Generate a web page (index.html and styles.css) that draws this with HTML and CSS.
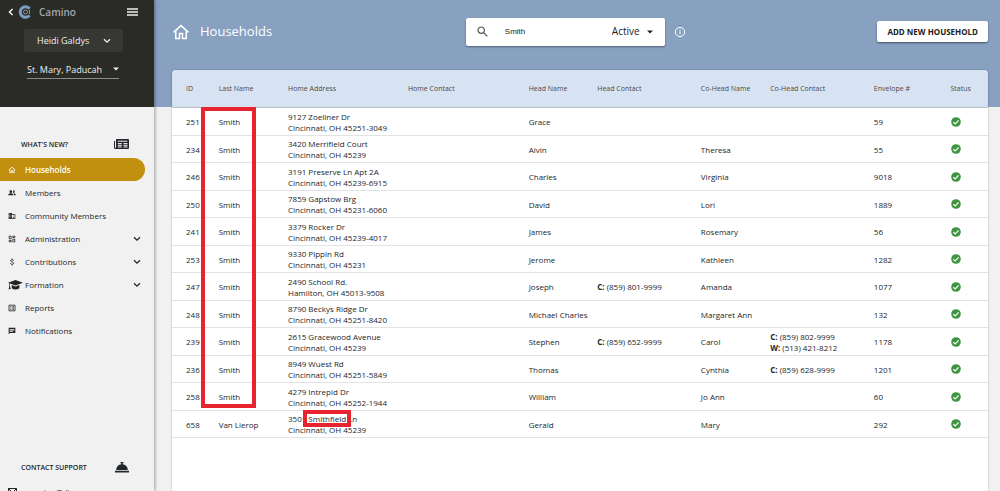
FILE: index.html
```html
<!DOCTYPE html>
<html lang="en">
<head>
<meta charset="utf-8">
<title>Camino – Households</title>
<link rel="stylesheet" href="styles.css">
</head>
<body>
<div class="app">
  <aside class="sidebar">
    <div class="brand-panel">
      <div class="brand">
        <svg class="back" viewBox="0 0 6 8"><path d="M4.6 1 1.4 4l3.2 3" /></svg>
        <svg class="logo" viewBox="0 0 14 14"><path class="logo-ring" d="M11.600 3.600A5.300 5.300 0 1 0 11.600 10.400" /><circle class="logo-core" cx="7.500" cy="7" r="2" /><path class="logo-core" d="M11.500 5V9" /></svg>
        <span class="brand-name">Camino</span>
        <button class="icon-button menu" aria-label="Menu"><svg viewBox="0 0 11 8"><path d="M0 1h11M0 4h11M0 7h11" /></svg></button>
      </div>
      <button class="user">Heidi Galdys<svg class="chevron" viewBox="0 0 8 6"><path d="m1 1.200 3 3 3-3" /></svg></button>
      <label class="parish"><select aria-label="Parish"><option>St. Mary, Paducah</option></select><svg class="caret" viewBox="0 0 6 4"><path d="M0 .5h6l-3 3z" /></svg></label>
    </div>
    <a class="side-head news-head" href="#">WHAT'S NEW?
      <svg class="news" viewBox="0 0 15 10"><path d="M2.500 0H14q1 0 1 1v8q0 1-1 1H1.500Q0 10 0 8.500V2h1v6.500q.7.800 1 0V1q0-1 .5-1z" /><path class="cut" d="M3.800 2.200h9.500M3.800 4.600h4M9.500 4.600h4M3.800 6.300h4M9.500 6.300h4M3.800 8h4M9.500 8h4" /></svg>
    </a>
    <nav class="nav">
      <a class="nav-item active" href="#"><svg class="nav-icon line" viewBox="0 0 24 24"><path d="M2.500 12 12 3.500l9.500 8.500M5.500 10v10h4.500v-6h4v6h4.500V10" /></svg>Households</a>
      <a class="nav-item" href="#"><svg class="nav-icon" viewBox="0 0 24 24"><circle cx="8.500" cy="8" r="4" /><path d="M1 19v-2c0-3 4-4.500 7.500-4.500S16 14 16 17v2zM15 4.200a4 4 0 1 1 0 7.600c1.500-2 1.500-5.600 0-7.600zM17 13c3 .4 6 1.700 6 4v2h-5v-2c0-1.700-.4-3-1-4z" /></svg>Members</a>
      <a class="nav-item" href="#"><svg class="nav-icon" viewBox="0 0 24 24"><path fill-rule="evenodd" d="M12 7V3H2v18h20V7zM6 19H4v-2h2zm0-4H4v-2h2zm0-4H4V9h2zm0-4H4V5h2zm4 12H8v-2h2zm0-4H8v-2h2zm0-4H8V9h2zm0-4H8V5h2zm10 12h-8V9h8zm-2-8h-3v2h3zm0 4h-3v2h3z" /></svg>Community Members</a>
      <a class="nav-item" href="#"><svg class="nav-icon line" viewBox="0 0 24 24"><path d="M3.500 3.500h6v8h-6zM14.500 3.500h6v4h-6zM14.500 12.500h6v8h-6zM3.500 16.500h6v4h-6z" /></svg>Administration<svg class="chevron" viewBox="0 0 8 6"><path d="m1 1.200 3 3 3-3" /></svg></a>
      <a class="nav-item" href="#"><svg class="nav-icon line" viewBox="0 0 24 24"><path d="M17 7.500C16 5 8 4 8 8.200c0 4.300 9 2.800 9 7.500 0 4.300-9 4-10 .3M12.500 1.500V5M12.500 19v3.500" /></svg>Contributions<svg class="chevron" viewBox="0 0 8 6"><path d="m1 1.200 3 3 3-3" /></svg></a>
      <a class="nav-item" href="#"><svg class="nav-icon cap" viewBox="0 0 15 10"><path d="M7.500 0 15 2.800 7.500 5.600 2 3.600v2.600l.7 3H.6l.7-3V3.300L0 2.800z" /><path d="M3.700 5 7.500 6.500 11.400 5v3.200Q7.500 10.600 3.700 8.200z" /></svg>Formation<svg class="chevron" viewBox="0 0 8 6"><path d="m1 1.200 3 3 3-3" /></svg></a>
      <a class="nav-item" href="#"><svg class="nav-icon line" viewBox="0 0 24 24"><path d="M3 3.500h18v17H3zM7 8h3M7 12h3M7 16h3M13 8h5M13 12h5M13 16h5" /></svg>Reports</a>
      <a class="nav-item" href="#"><svg class="nav-icon" viewBox="0 0 24 24"><path fill-rule="evenodd" d="M2 2h20v16H6l-4 4zm3 4v2h14V6zm0 3.500v2h14v-2zM5 13v2h10v-2z" /></svg>Notifications</a>
    </nav>
    <div class="support">
      <a class="side-head" href="#">CONTACT SUPPORT
        <svg class="bell" viewBox="0 0 14 11"><path d="M5.500 0h3v1.200H7.700v1C10.500 2.500 12.700 4.800 12.900 8H1.100C1.300 4.800 3.500 2.500 6.300 2.200v-1h-.8zM0 8.800h14v1.700H0z" /></svg>
      </a>
      <a class="mail" href="#"><svg viewBox="0 0 9 8"><path d="M.5.500h8v7h-8zM.5.500l4 4 4-4" /></svg>camino@diocesan.com</a>
    </div>
  </aside>

  <main class="main">
    <header class="topbar">
      <h1 class="title"><svg viewBox="0 0 24 24"><path d="M2 12.500 12 3.500l10 9M5 10.500V20.500h5v-6.500h4v6.500h5V10.500" /></svg>Households</h1>
      <form class="search">
        <svg class="glass" viewBox="0 0 11 11"><circle cx="4.200" cy="4.200" r="3.200" /><path d="m6.500 6.500 3.800 3.800" /></svg>
        <input type="text" value="Smith" aria-label="Search households">
        <label class="status-filter"><select aria-label="Status"><option>Active</option></select><svg class="caret" viewBox="0 0 6 4"><path d="M0 .5h6l-3 3z" /></svg></label>
      </form>
      <div class="actions">
        <button class="icon-button info" aria-label="Information"><svg viewBox="0 0 12 12"><circle cx="6" cy="6" r="4.600" /><path d="M6 5.300v3.200M6 3.300v1.200" /></svg></button>
        <button class="add">ADD NEW HOUSEHOLD</button>
      </div>
    </header>

    <section class="card">
      <table class="households">
        <colgroup><col class="c-id"><col class="c-name"><col class="c-address"><col class="c-home"><col class="c-head"><col class="c-contact"><col class="c-name"><col class="c-contact"><col class="c-envelope"><col class="c-status"></colgroup>
        <thead><tr><th>ID</th><th>Last Name</th><th>Home Address</th><th>Home Contact</th><th>Head Name</th><th>Head Contact</th><th>Co-Head Name</th><th>Co-Head Contact</th><th>Envelope #</th><th>Status</th></tr></thead>
        <tbody id="rows"></tbody>
      </table>
      <div class="mark-column"></div>
    </section>
  </main>
</div>
<script src="rows.js"></script>
</body>
</html>
```
FILE: styles.css
```css
* { box-sizing: border-box; }

body {
  margin: 0;
  background: #f1f1f1;
  color: #22252a;
  font: 8px/11px "Open Sans", "Noto Sans", sans-serif;
}

a { color: inherit; text-decoration: none; }
button, input, select { font: inherit; color: inherit; border: 0; margin: 0; padding: 0; background: none; }
select { appearance: none; }
svg { display: block; flex: none; fill: currentColor; }

.app { display: flex; height: 100vh; overflow: hidden; }

/* Sidebar */
.sidebar {
  display: flex;
  flex-direction: column;
  flex: none;
  width: 154px;
  background: #f1f1f1;
  box-shadow: 1px 0 3px rgba(0, 0, 0, .35);
  z-index: 1;
}
.brand-panel {
  display: flex;
  flex-direction: column;
  height: 107px;
  flex: none;
  background: #2a2a26;
  color: #f0f0f0;
}
.brand { display: flex; align-items: center; height: 24px; padding: 0 16px 0 8px; }
.back { width: 6px; height: 8px; margin-right: 4px; fill: none; stroke: #fff; stroke-width: 1.3; }
.logo { width: 14px; height: 14px; }
.logo-ring { fill: none; stroke: #7c9cc6; stroke-width: 3; }
.logo-core { fill: none; stroke: #8f98a3; stroke-width: 1; }
.brand-name { margin-left: 7px; color: #a4a8ac; font-size: 10px; font-weight: 600; }
.icon-button svg { fill: none; stroke: currentColor; }
.menu { margin-left: auto; }
.menu svg { width: 11px; height: 8px; stroke-width: 1.3; }
.user {
  display: flex;
  align-items: center;
  justify-content: space-between;
  height: 23px;
  margin: 5px 31px 0 24px;
  padding: 0 12px 0 13px;
  border-radius: 2px;
  background: #373734;
  font-size: 9px;
}
.chevron { width: 8px; height: 6px; fill: none; stroke: currentColor; stroke-width: 1.3; }
.caret { width: 6px; height: 4px; }
.parish {
  display: flex;
  align-items: center;
  height: 19px;
  margin: 8px 35px 0 27px;
  border-bottom: 1px solid #8b8b88;
  font-size: 9px;
}
.parish select { flex: 1; min-width: 0; }

.side-head {
  display: flex;
  align-items: center;
  justify-content: space-between;
  height: 20px;
  flex: none;
  padding: 0 25px 0 21px;
  font-size: 7px;
  font-weight: 600;
}
.news-head { margin-top: 27px; }
.news { width: 15px; height: 10px; }
.news .cut { stroke: #f1f1f1; stroke-width: 1; }
.bell { width: 14px; height: 11px; }

.nav { display: flex; flex-direction: column; margin-top: 4px; }
.nav-item {
  display: flex;
  align-items: center;
  height: 23px;
  margin-right: 9px;
  padding: 0 4px 0 8px;
}
.nav-item.active { border-radius: 0 12px 12px 0; background: #c2900f; color: #fff; font-weight: 600; }
.nav-icon { width: 8px; height: 8px; margin-right: 9px; }
.nav-icon.line { fill: none; stroke: currentColor; stroke-width: 2.5; }
.nav-icon.cap { width: 15px; height: 10px; margin-right: 2px; color: #222; }
.nav-item .chevron { margin-left: auto; }

.support { margin-top: 115px; }
.mail { display: flex; align-items: center; gap: 11px; margin-top: 9px; padding-left: 8px; }
.mail svg { width: 9px; height: 8px; fill: none; stroke: currentColor; }

/* Main area */
.main { display: flex; flex-direction: column; flex: 1; min-width: 0; padding: 0 12px 0 18px; background: linear-gradient(#88a1c1 107px, #f1f1f1 107px); }
.topbar { display: flex; align-items: center; height: 63px; flex: none; color: #fff; }
.title, .actions { display: flex; align-items: center; flex: 10 1 0; }
.actions { flex-grow: 11; }
.title { gap: 10px; margin: 0; font-size: 13px; font-weight: 400; }
.title svg { width: 18px; height: 18px; fill: none; stroke: currentColor; stroke-width: 2; }
.search {
  display: flex;
  align-items: center;
  width: 199px;
  height: 28px;
  padding: 0 12px 0 11px;
  border-radius: 2px;
  background: #fff;
  color: #222;
  box-shadow: 0 1px 2px rgba(0, 0, 0, .4);
}
.glass { width: 11px; height: 11px; fill: none; stroke: #555; stroke-width: 1.2; }
.search input { flex: 1; min-width: 0; margin-left: 17px; font-family: "Liberation Sans", sans-serif; }
.status-filter { display: flex; align-items: center; gap: 7px; font-size: 10px; }
.info { margin-left: 9px; }
.info svg { width: 12px; height: 12px; }
.add {
  height: 21px;
  margin-left: auto;
  padding: 0 10px;
  border-radius: 2px;
  background: #fff;
  color: #222;
  font-weight: 700;
  box-shadow: 0 1px 2px rgba(0, 0, 0, .5);
}

.card {
  position: relative;
  flex: 1;
  margin-top: 7px;
  border-radius: 4px 4px 0 0;
  background: #fff;
  box-shadow: 0 0 2px rgba(0, 0, 0, .35);
}
.households { width: 100%; table-layout: fixed; border-collapse: separate; border-spacing: 0; }
.c-id { width: 4%; }
.c-name { width: 8.5%; }
.c-address { width: 14.7%; }
.c-home { width: 14.8%; }
.c-head { width: 8.4%; }
.c-contact { width: 12.7%; }
.c-envelope { width: 9.4%; }
.c-status { width: 6.3%; }
th, td { padding: 0 0 0 14px; text-align: left; vertical-align: middle; white-space: nowrap; }
th { height: 38px; border-bottom: 1px solid #b9bdc4; background: #d7e3f3; color: #4d4844; font-size: 7px; font-weight: 400; }
th:first-child { border-radius: 4px 0 0 0; }
th:last-child { border-radius: 0 4px 0 0; }
td { height: 28px; border-bottom: 1px solid #e2e3e5; }
tr:nth-child(even) td { height: 27px; }
.check { width: 10px; height: 10px; }
.check circle { fill: #3f9440; }
.check path { fill: none; stroke: #fff; stroke-width: 1.2; }

/* Highlight frames drawn over the table */
.mark-column { position: absolute; top: 37px; left: 29px; width: 55px; height: 301px; border: 4px solid #e82430; }
.mark { position: relative; }
.mark::after { content: ""; position: absolute; inset: -3px -5px; border: 4px solid #e82430; }
```
FILE: rows.js
```js
const households = [
  [251, "Smith", "9127 Zoellner Dr|Cincinnati, OH 45251-3049", "Grace", "", "", "", 59],
  [234, "Smith", "3420 Merrifield Court|Cincinnati, OH 45239", "Alvin", "", "Theresa", "", 55],
  [246, "Smith", "3191 Preserve Ln Apt 2A|Cincinnati, OH 45239-6915", "Charles", "", "Virginia", "", 9018],
  [250, "Smith", "7859 Gapstow Brg|Cincinnati, OH 45231-6060", "David", "", "Lori", "", 1889],
  [241, "Smith", "3379 Rocker Dr|Cincinnati, OH 45239-4017", "James", "", "Rosemary", "", 56],
  [253, "Smith", "9330 Pippin Rd|Cincinnati, OH 45231", "Jerome", "", "Kathleen", "", 1282],
  [247, "Smith", "2490 School Rd.|Hamilton, OH 45013-9508", "Joseph", "<b>C:</b> (859) 801-9999", "Amanda", "", 1077],
  [248, "Smith", "8790 Beckys Ridge Dr|Cincinnati, OH 45251-8420", "Michael Charles", "", "Margaret Ann", "", 132],
  [239, "Smith", "2615 Gracewood Avenue|Cincinnati, OH 45239", "Stephen", "<b>C:</b> (859) 652-9999", "Carol", "<b>C:</b> (859) 802-9999|<b>W:</b> (513) 421-8212", 1178],
  [236, "Smith", "8949 Wuest Rd|Cincinnati, OH 45251-5849", "Thomas", "", "Cynthia", "<b>C:</b> (859) 628-9999", 1201],
  [258, "Smith", "4279 Intrepid Dr|Cincinnati, OH 45252-1944", "William", "", "Jo Ann", "", 60],
  [658, "Van Lierop", "3501 <span class=\"mark\">Smithfield</span> Ln|Cincinnati, OH 45239", "Gerald", "", "Mary", "", 292],
];
const check = '<svg class="check" viewBox="0 0 10 10" role="img" aria-label="Active"><circle cx="5" cy="5" r="4.8"/><path d="m2.400 5.200 1.800 1.700 3.400-3.500"/></svg>';
document.getElementById("rows").innerHTML = households.map(([id, last, address, head, headContact, coHead, coContact, envelope]) =>
  "<tr>" + [id, last, address, "", head, headContact, coHead, coContact, envelope, check]
    .map(value => `<td>${String(value).replace("|", "<br>")}</td>`).join("") + "</tr>").join("");
```
